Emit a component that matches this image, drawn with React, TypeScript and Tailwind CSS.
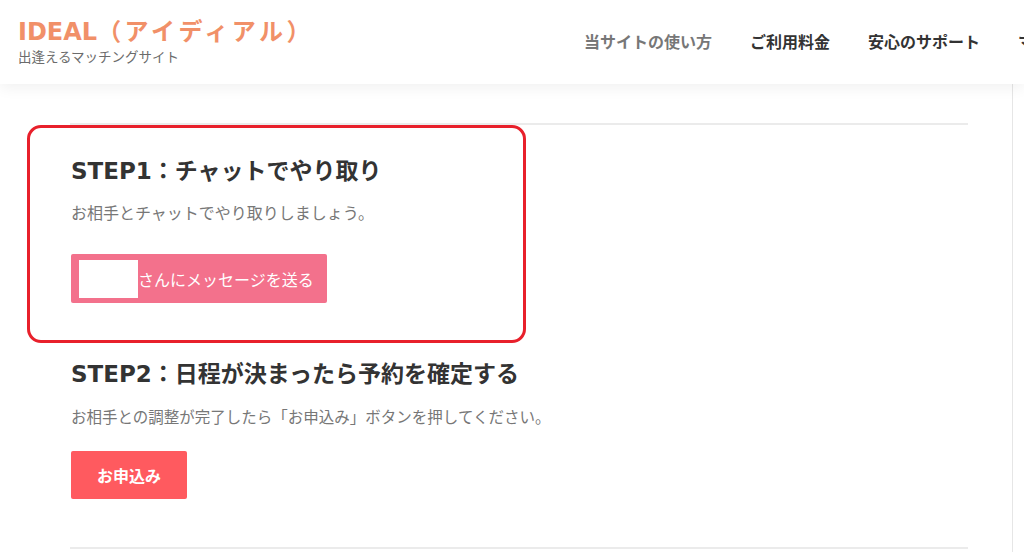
import React from 'react';

const headFont = { fontFamily: '"DejaVu Sans", "Noto Sans CJK JP", sans-serif' };
const jpFont = { fontFamily: '"Noto Sans CJK JP", sans-serif' };

const navItems = [
    { label: '当サイトの使い方', active: true },
    { label: 'ご利用料金', active: false },
    { label: '安心のサポート', active: false },
    { label: 'マイページ', active: false },
];

const SiteHeader = () => (
    <header className="relative z-10 flex h-[84px] items-stretch overflow-hidden bg-white pl-[18px] shadow-[0_4px_14px_rgba(0,0,0,0.06)]">
        <div className="w-[566px] shrink-0 pt-[17px]">
            <div className="whitespace-nowrap text-[24px] font-bold leading-[30px] text-[#f19068]" style={headFont}>
                IDEAL<span className="tracking-[3.5px]">（アイディアル）</span>
            </div>
            <div className="text-[13.5px] leading-[18px] text-[#6b6b6b]" style={jpFont}>
                出逢えるマッチングサイト
            </div>
        </div>
        <nav className="flex shrink-0 items-center gap-[38px] whitespace-nowrap pb-[3px]" style={jpFont}>
            {navItems.map((item) => (
                <a
                    key={item.label}
                    className={`text-[16px] font-bold ${item.active ? 'text-[#777]' : 'text-[#333]'}`}
                >
                    {item.label}
                </a>
            ))}
        </nav>
    </header>
);

export default function App() {
    return (
        <div className="relative h-[552px] w-[1024px] overflow-hidden bg-white">
            <SiteHeader />

            <main className="h-[468px] w-[1013px] border-r border-[#e6e6e6] bg-white pt-[39px]">
                <div className="ml-[70px] w-[898px]">
                    <div className="h-[2px] bg-[#ebebeb]" />

                    {/* STEP 1 */}
                    <h2 className="mt-[29px] pl-px text-[23px] font-bold leading-[34px] text-[#333]" style={headFont}>
                        STEP1：チャットでやり取り
                    </h2>
                    <p className="mt-[10px] pl-px text-[16px] leading-[28px] text-[#777]" style={jpFont}>
                        お相手とチャットでやり取りしましょう。
                    </p>
                    <button
                        className="ml-px mt-[28px] flex h-[49px] w-[256px] items-center rounded-[2px] bg-[#f3718c] pl-2 text-[16px] text-white"
                        style={jpFont}
                    >
                        <span className="h-[38px] w-[59px] shrink-0 bg-white" />
                        <span>さんにメッセージを送る</span>
                    </button>

                    {/* STEP 2 */}
                    <h2 className="mt-[54px] pl-px text-[23px] font-bold leading-[34px] text-[#333]" style={headFont}>
                        STEP2：日程が決まったら予約を確定する
                    </h2>
                    <p className="mt-[11px] pl-px text-[15.5px] leading-[28px] text-[#777]" style={jpFont}>
                        お相手との調整が完了したら「お申込み」ボタンを押してください。
                    </p>
                    <button
                        className="ml-px mt-[21px] flex h-[48px] w-[116px] items-center justify-center rounded-[2px] bg-[#ff5a5f] text-[16px] font-bold text-white"
                        style={jpFont}
                    >
                        お申込み
                    </button>

                    <div className="mt-[48px] h-[2px] bg-[#ebebeb]" />
                </div>
            </main>

            {/* annotation frame */}
            <div className="pointer-events-none absolute left-[27px] top-[125px] h-[218px] w-[499px] rounded-[14px] border-[3px] border-[#e8202b]" />
        </div>
    );
}
